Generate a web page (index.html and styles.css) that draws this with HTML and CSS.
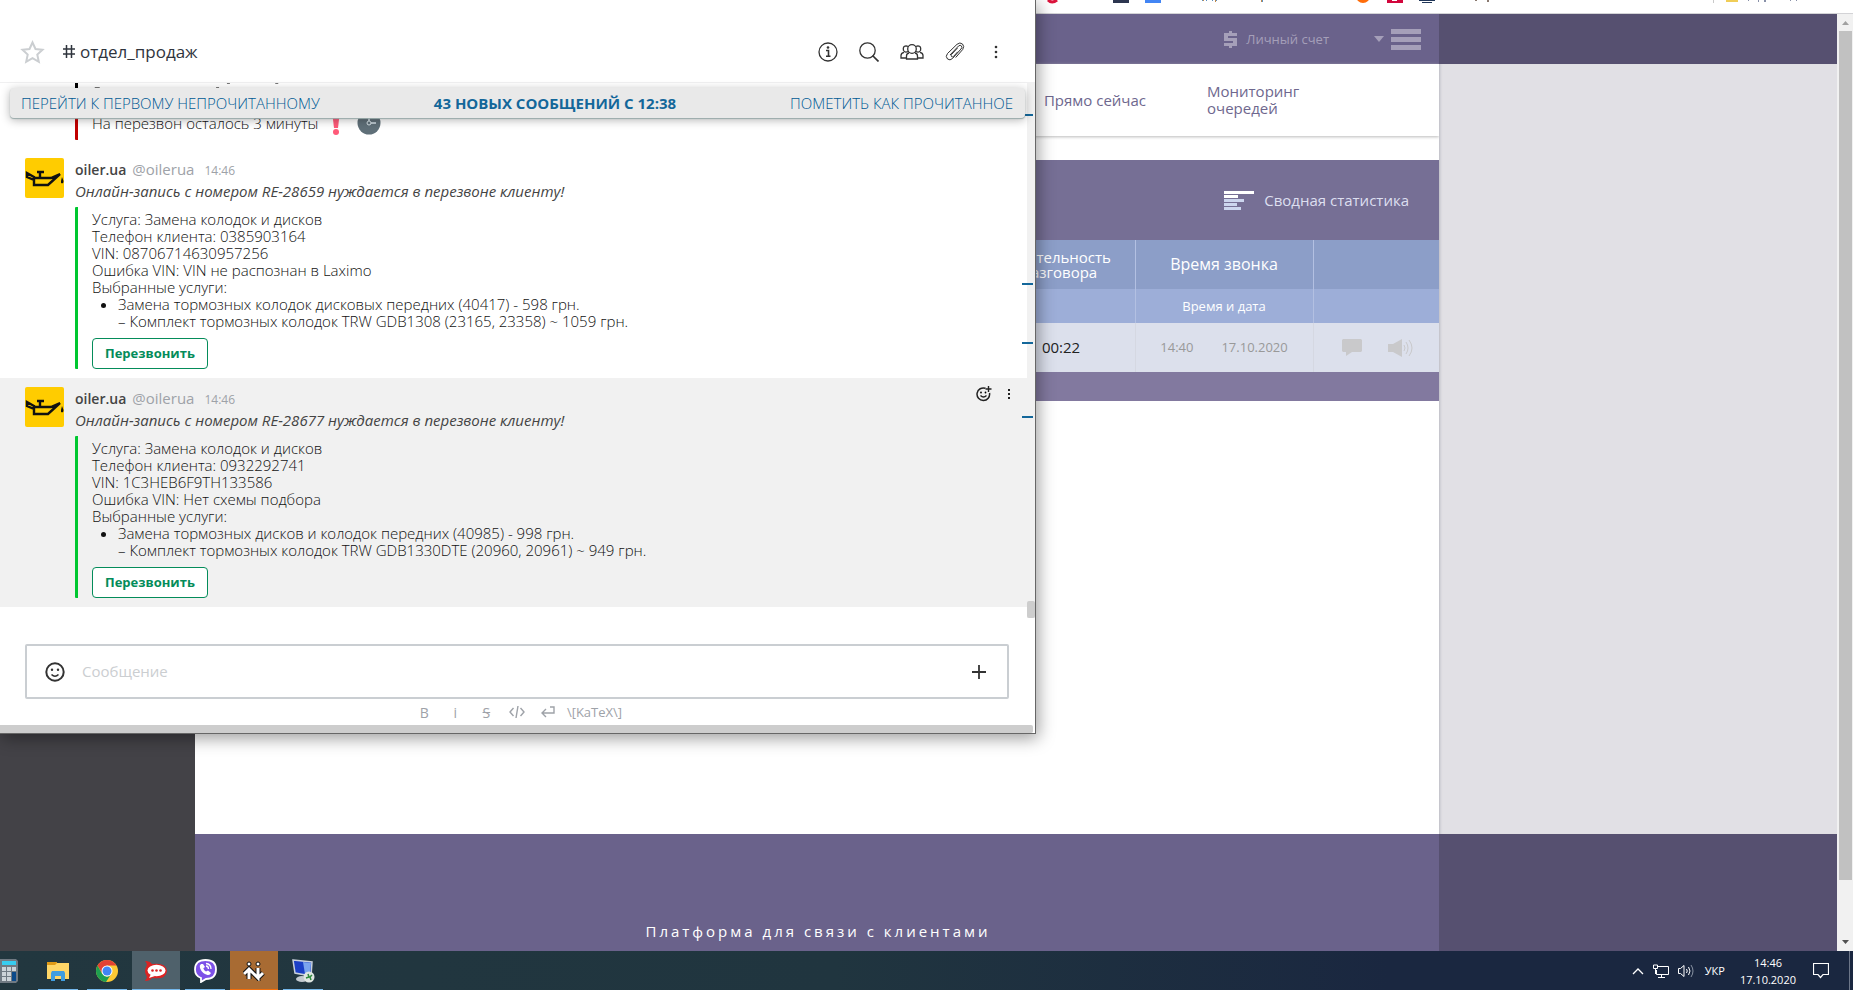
FILE: index.html
```html
<!DOCTYPE html>
<html lang="ru">
<head>
<meta charset="utf-8">
<title>отдел_продаж</title>
<link rel="stylesheet" href="styles.css">
</head>
<body>
<div class="desktop">
  <div class="browser">
    <div class="bookmarks">
      <svg width="817" height="13" viewBox="0 0 817 13" aria-hidden="true">
        <path d="M12 0q4 4 9 0" fill="none" stroke="#dc143c" stroke-width="3"/>
        <path d="M77 0h16v3H77z" fill="#2d3650"/><path d="M109 0h16v3h-16z" fill="#4285f4"/>
        <path d="M166 0h1v1h-1zM170 0h1v1h-1zM176 0h1v1h-1zM180 0h1v1h-1zM226 0h1v2h-1z" fill="#5a8fc0"/><path d="M167 0h1v1h-1zM179 0h1v2h-1zM225 0h1v2h-1z" fill="#c48a4a"/>
        <circle cx="327" cy="-4" r="7" fill="#ff6d0a"/>
        <path d="M351 0h16v3h-16z" fill="#d2063c"/><path d="M356 0h5v1h-5z" fill="#fff"/>
        <path d="M383 0h16v1h-16zM386 2h10v1h-10z" fill="#1f3557"/>
        <path d="M439 0h2v1h-2zM451 0h2v2h-2z" fill="#8a7a70"/>
        <path d="M677 0h1v3h-1z" fill="#c9c9c9"/>
        <path d="M690 0h12v2h-12z" fill="#f0cd57"/>
        <path d="M712 0h1v1h-1zM722 0h1v2h-1zM728 0h2v2h-2zM754 0h1v1h-1zM760 0h1v1h-1z" fill="#8890a8"/>
      </svg>
    </div>
    <div class="viewport">
      <div class="page">
        <div class="side side-left"><div class="side-head"></div><div class="side-body"></div></div>
        <main class="main">
          <header class="site-head">
            <a class="account" href="#">
              <svg width="14" height="17" viewBox="0 0 14 17" aria-hidden="true"><path d="M5 0h3v2h5v3H4v2h9v8H8v2H5v-2H0v-3h9v-2H0V2h5z" fill="#a59fb9"/></svg>
              Личный счет
            </a>
            <svg class="caret" width="10" height="6" viewBox="0 0 10 6" aria-hidden="true"><path d="M0 0h10L5 6z" fill="#a59fb9"/></svg>
            <button class="burger" aria-label="Меню"><span></span><span></span><span></span></button>
          </header>
          <nav class="site-nav">
            <a class="nav-now" href="#">Прямо сейчас</a>
            <a class="nav-queue" href="#">Мониторинг очередей</a>
          </nav>
          <section class="report">
            <div class="report-head">
              <a href="#">
                <svg width="30" height="19" viewBox="0 0 30 19" aria-hidden="true"><path d="M0 0h30v3H0zM0 4h14v3H0z" fill="#fff"/><path d="M0 8h20v3H0zM0 12h13v3H0zM0 16h17v3H0z" fill="#ccd5ee"/></svg>
                Сводная статистика
              </a>
            </div>
            <table class="calls">
              <colgroup><col><col class="col-len"><col class="col-time"><col class="col-act"></colgroup>
              <thead>
                <tr class="row-head"><th></th><th class="th-len">Длительность разговора</th><th>Время звонка</th><th></th></tr>
                <tr class="row-sub"><th></th><th></th><th>Время и дата</th><th></th></tr>
              </thead>
              <tbody>
                <tr><td></td><td class="len">00:22</td><td><div class="when"><span>14:40</span><span>17.10.2020</span></div></td>
                <td><div class="acts">
                  <svg width="20" height="17" viewBox="0 0 20 17" aria-hidden="true"><path d="M1 0h18l1 1v11l-1 1H10l-6 4v-4H1l-1-1V1z" fill="#c9c9cb"/></svg>
                  <svg width="26" height="18" viewBox="0 0 26 18" aria-hidden="true"><path d="M0 5h5l9-5v18l-9-5H0z" fill="#c9c9cb"/><path d="M16 6q2 3 0 6M18 3q4 6 0 12M21 1q6 8 0 16" fill="none" stroke="#c9c9cb"/></svg>
                </div></td></tr>
              </tbody>
            </table>
            <div class="report-foot"></div>
          </section>
          <div class="blank"></div>
          <footer class="site-foot">Платформа для связи с клиентами</footer>
        </main>
        <div class="side side-right"><div class="side-head"></div><div class="side-body"></div><div class="side-foot"></div></div>
      </div>
      <div class="scroll">
        <svg width="16" height="17" viewBox="0 0 16 17" aria-hidden="true"><path d="M5 11l3.500-4 3.500 4z" fill="#a0a0a0"/></svg>
        <div class="scroll-track"><div class="scroll-thumb"></div></div>
        <svg width="16" height="17" viewBox="0 0 16 17" aria-hidden="true"><path d="M5 6h7l-3.500 4z" fill="#505050"/></svg>
      </div>
    </div>
  </div>

  <section class="chat">
    <header class="chat-head">
      <svg width="25" height="24" viewBox="0 0 25 24" aria-hidden="true"><path d="M12.500 2.500l3 6.500 7 .8-5.200 4.800 1.500 7.200-6.300-3.600-6.300 3.600 1.500-7.200L2.500 9.800l7-.8z" fill="none" stroke="#cbced1" stroke-width="2"/></svg>
      <h1><svg width="12" height="13" viewBox="0 0 12 13" aria-hidden="true"><path d="M3.500 0v13M8.500 0v13M0 4h12M0 9h12" stroke="#2f343d" stroke-width="1.500"/></svg>отдел_продаж</h1>
      <div class="tools">
        <button aria-label="Информация"><svg width="20" height="20" viewBox="0 0 20 20"><circle cx="10" cy="10" r="9" fill="none" stroke="#333" stroke-width="1.300"/><circle cx="10" cy="5.500" r="1.300" fill="#333"/><path d="M8 8.500h2.500V14M8 14.300h4.500" fill="none" stroke="#333" stroke-width="1.600"/></svg></button>
        <button aria-label="Поиск"><svg width="20" height="20" viewBox="0 0 20 20"><circle cx="8.500" cy="8.500" r="7.700" fill="none" stroke="#333" stroke-width="1.300"/><path d="M13.500 13.500l6 6" stroke="#333" stroke-width="1.700"/></svg></button>
        <button aria-label="Участники"><svg width="24" height="16" viewBox="0 0 24 16" fill="none" stroke="#333" stroke-width="1.300"><circle cx="12" cy="5" r="4.300"/><path d="M9 9q-2.500.5-2.500 3v3h11v-3q0-2.500-2.500-3M8 7.500Q5 9 3.500 6.500 2.500 2 6 1.800q1.200 0 2 .8M16 7.500q3 1.500 4.500-1 1-4.500-2.500-4.700-1.200 0-2 .8M4 8.300Q1 9 1 11.500V14h5.500M20 8.300q3 .7 3 3.200V14h-5.500"/></svg></button>
        <button aria-label="Файлы"><svg width="20" height="20" viewBox="0 0 20 20"><path d="M5 13l8.500-9q1.800-1.500 3 0 1 1.500-.5 3l-8.500 9.500q-2.500 2.500-5 .5-2.500-2.500 0-5.500L12 2.300q3-2.500 5.500-.3 2.300 2.300.2 5.500l-7 8M12.500 6l-6 6.500q-.8 1.500.2 2.200.8.600 2-.4l4-4.500" fill="none" stroke="#333" stroke-width="1"/></svg></button>
        <button aria-label="Ещё"><svg width="20" height="20" viewBox="0 0 20 20" fill="#333"><circle cx="10" cy="5" r="1.300"/><circle cx="10" cy="10" r="1.300"/><circle cx="10" cy="15" r="1.300"/></svg></button>
      </div>
    </header>

    <div class="messages">
      <div class="unread-bar">
        <button>ПЕРЕЙТИ К ПЕРВОМУ НЕПРОЧИТАННОМУ</button>
        <strong>43 НОВЫХ СООБЩЕНИЙ С 12:38</strong>
        <button>ПОМЕТИТЬ КАК ПРОЧИТАННОЕ</button>
      </div>
      <div class="list">
        <div class="older">
          <svg class="older-edge" width="220" height="6" viewBox="0 0 220 6" aria-hidden="true"><path d="M17 4h5v1h-5zM140 4h3v1h-3zM151 0h3v1h-3zM200 0h3v1h-3z" fill="#777"/></svg>
          <div class="attach attach-red">
            <p class="due">На перезвон осталось 3 минуты
              <svg width="10" height="24" viewBox="0 0 10 24" aria-hidden="true"><path d="M1 0h8L7 17H3z" fill="#ff5a79"/><circle cx="5" cy="21" r="3" fill="#ff5a79"/></svg>
              <svg class="clock-emoji" width="24" height="24" viewBox="0 0 24 24" aria-hidden="true"><circle cx="12" cy="12" r="11.500" fill="#5f6f78"/><path d="M12 3v9h7" fill="none" stroke="#d5e0e6" stroke-width="1.600"/><circle cx="12" cy="12" r="2" fill="#5f6f78" stroke="#d5e0e6"/></svg>
            </p>
          </div>
        </div>
        <article class="msg">
          <svg class="avatar" width="39" height="40" viewBox="0 0 39 40" aria-hidden="true"><rect width="39" height="40" rx="2" fill="#fc0"/><path d="M9 19l-7-4v4l7 3v5h14l12-11-9 4H9zM15 19v-4M12 14h7" fill="none" stroke="#111" stroke-width="2.400"/><path d="M37 19l1.500 4q.3 2-1.500 2.500Q35.500 25 36 23z" fill="#111"/></svg>
          <div class="msg-body">
            <div class="who"><b>oiler.ua</b><span>@oilerua</span><time>14:46</time></div>
            <p class="lead">Онлайн-запись с номером RE-28659 нуждается в перезвоне клиенту!</p>
            <div class="attach">
              <p>Услуга: Замена колодок и дисков</p>
              <p>Телефон клиента: 0385903164</p>
              <p>VIN: 08706714630957256</p>
              <p>Ошибка VIN: VIN не распознан в Laximo</p>
              <p>Выбранные услуги:</p>
              <ul><li>Замена тормозных колодок дисковых передних (40417) - 598 грн.<br>– Комплект тормозных колодок TRW GDB1308 (23165, 23358) ~ 1059 грн.</li></ul>
              <button class="call">Перезвонить</button>
            </div>
          </div>
        </article>
        <article class="msg msg-hover">
          <svg class="avatar" width="39" height="40" viewBox="0 0 39 40" aria-hidden="true"><rect width="39" height="40" rx="2" fill="#fc0"/><path d="M9 19l-7-4v4l7 3v5h14l12-11-9 4H9zM15 19v-4M12 14h7" fill="none" stroke="#111" stroke-width="2.400"/><path d="M37 19l1.500 4q.3 2-1.500 2.500Q35.500 25 36 23z" fill="#111"/></svg>
          <div class="msg-body">
            <div class="who"><b>oiler.ua</b><span>@oilerua</span><time>14:46</time></div>
            <p class="lead">Онлайн-запись с номером RE-28677 нуждается в перезвоне клиенту!</p>
            <div class="attach">
              <p>Услуга: Замена колодок и дисков</p>
              <p>Телефон клиента: 0932292741</p>
              <p>VIN: 1C3HEB6F9TH133586</p>
              <p>Ошибка VIN: Нет схемы подбора</p>
              <p>Выбранные услуги:</p>
              <ul><li>Замена тормозных дисков и колодок передних (40985) - 998 грн.<br>– Комплект тормозных колодок TRW GDB1330DTE (20960, 20961) ~ 949 грн.</li></ul>
              <button class="call">Перезвонить</button>
            </div>
          </div>
          <div class="msg-tools">
            <button aria-label="Реакция"><svg width="16" height="16" viewBox="0 0 16 16"><path d="M9.500 2.300A6.300 6.300 0 1 0 13.500 7" fill="none" stroke="#222" stroke-width="1.500"/><path d="M12.500 0v6M9.500 3h6M4.500 9.500q3 3 6 0" fill="none" stroke="#222" stroke-width="1.400"/><circle cx="5" cy="6.500" r=".9"/><circle cx="9.500" cy="6.500" r=".9"/></svg></button>
            <button aria-label="Действия"><svg width="16" height="16" viewBox="0 0 16 16"><path d="M7 3h2v2H7zM7 7h2v2H7zM7 11h2v2H7z" fill="#222"/></svg></button>
          </div>
        </article>
      </div>
      <div class="list-scroll"><div></div></div>
      <i class="tick tick-1"></i><i class="tick tick-2"></i><i class="tick tick-3"></i><i class="tick tick-4"></i>
    </div>

    <div class="composer">
      <button aria-label="Эмодзи"><svg width="20" height="20" viewBox="0 0 20 20"><circle cx="10" cy="10" r="8.700" fill="none" stroke="#333" stroke-width="2"/><circle cx="7" cy="7.800" r="1.200" fill="#333"/><circle cx="13" cy="7.800" r="1.200" fill="#333"/><path d="M6.500 12.500q3.500 3.500 7 0" fill="none" stroke="#333" stroke-width="1.600"/></svg></button>
      <input type="text" placeholder="Сообщение" aria-label="Сообщение">
      <button aria-label="Добавить"><svg width="16" height="16" viewBox="0 0 16 16"><path d="M8 1v14M1 8h14" stroke="#333" stroke-width="1.800"/></svg></button>
    </div>
    <div class="formats">
      <button>B</button><button>i</button><button><s>S</s></button>
      <button aria-label="Код"><svg width="16" height="12" viewBox="0 0 16 12" fill="none" stroke="#9ea2a8" stroke-width="1.400"><path d="M4.500 2L1 6l3.500 4M11.500 2L15 6l-3.500 4M9 0L7 12"/></svg></button>
      <button aria-label="Многострочный"><svg width="14" height="12" viewBox="0 0 14 12" fill="none" stroke="#9ea2a8" stroke-width="1.400"><path d="M9 1h4v6H1M5 3L1 7l4 4"/></svg></button>
      <a href="#">\[KaTeX\]</a>
    </div>
    <div class="h-scroll"></div>
  </section>
</div>

<footer class="taskbar">
  <button class="app app-cut" aria-label="Калькулятор"><svg width="18" height="24" viewBox="0 0 18 24"><path d="M0 0h16l2 2v20l-2 2H0z" fill="#707a83"/><path d="M2 2h14v4H2z" fill="#38cdf0"/><path d="M2 8h4v4H2zM7 8h4v4H7zM12 8h4v4h-4zM2 13h4v4H2zM7 13h4v4H7zM2 18h4v4H2zM7 18h4v4H7z" fill="#ccd3d8"/><path d="M12 13h4v9h-4z" fill="#0b4a8a"/></svg></button>
  <button class="app open" aria-label="Проводник"><svg width="22" height="20" viewBox="0 0 22 20"><path d="M0 1h10v4H0z" fill="#e09a16"/><path d="M0 4h8l2-2h12v16H0z" fill="#ffd667"/><path d="M4 20v-8l1-2h12l1 2v8h-4v-5H8v5z" fill="#3f9de0"/></svg></button>
  <button class="app open" aria-label="Chrome"><svg width="22" height="22" viewBox="0 0 22 22"><circle cx="11" cy="11" r="11" fill="#fcc934"/><path d="M1.500 5.500A11 11 0 0 1 20.500 5.500H11L6 13z" fill="#e34133"/><path d="M1.500 5.500A11 11 0 0 0 10 22l5.500-8.500L11 17l-5-3.500z" fill="#1e9e50"/><circle cx="11" cy="11" r="5.500" fill="#fff"/><circle cx="11" cy="11" r="4.500" fill="#4285f4"/></svg></button>
  <button class="app open active" aria-label="Rocket.Chat"><svg width="22" height="20" viewBox="0 0 22 20"><path d="M0 0q5 0 7 3 14-2 15 7-1 9-15 7-2 3-7 3 3-4 1-6-2-4 0-8 2-3-1-6z" fill="#db2323"/><ellipse cx="11.500" cy="9.500" rx="9" ry="5.800" fill="#fff"/><path d="M6 13l-2 4 6-2z" fill="#fff"/><circle cx="7.500" cy="9.500" r="1.300" fill="#db2323"/><circle cx="11.500" cy="9.500" r="1.300" fill="#db2323"/><circle cx="15.500" cy="9.500" r="1.300" fill="#db2323"/></svg></button>
  <button class="app open" aria-label="Viber"><svg width="23" height="24" viewBox="0 0 23 24"><path d="M11.500 1Q22 1 22 10.500T12 20l-5 3v-4Q1 17 1 10.500 1 1 11.500 1z" fill="#7d51e8" stroke="#fff" stroke-width="1.800"/><path d="M7 5Q5 6.500 6 9q2 5.500 7.500 7 2.500.5 3.500-2l-3-2.500-2 1q-2-1-2.700-3.200L11 8 9 5z" fill="#fff"/><path d="M12 4.500q5 .5 5 5.500M12 7q2.500.3 2.500 3" fill="none" stroke="#fff" stroke-width="1.300"/></svg></button>
  <button class="app open alert" aria-label="Телефония"><svg width="22" height="20" viewBox="0 0 22 20"><g fill="none" stroke="#111" stroke-width="5"><path d="M6 18V8M1 13l5-5 9 9V7M11 13l4 4 5-5"/></g><g fill="none" stroke="#fff" stroke-width="3"><path d="M6 18V8M1 13l5-5 9 9V7M11 13l4 4 5-5"/></g><circle cx="6" cy="3" r="2" fill="#fff" stroke="#111"/><circle cx="15" cy="3" r="2" fill="#fff" stroke="#111"/></svg></button>
  <button class="app open" aria-label="Удалённый рабочий стол"><svg width="23" height="24" viewBox="0 0 23 24"><path d="M1 1l19 2-1 14L3 14z" fill="#1b3fc6" stroke="#c8d0dc" stroke-width="1.500"/><path d="M11 3l8 1-1 12-5-1z" fill="#7ba4ee"/><ellipse cx="10" cy="20" rx="6" ry="3" fill="#c3cad0"/><circle cx="17" cy="18" r="5.500" fill="#dfe5e2"/><path d="M14 19l3-1-1-3M20 16l-2 2 1 3" fill="none" stroke="#2e8b3d" stroke-width="1.500"/></svg></button>
  <div class="tray">
    <svg width="12" height="8" viewBox="0 0 12 8" aria-hidden="true"><path d="M1 7l5-5 5 5" fill="none" stroke="#fff" stroke-width="1.300"/></svg>
    <svg width="16" height="14" viewBox="0 0 16 14" aria-hidden="true"><path d="M5 2.500h10.500v8H3.500V6M8.500 10.500v3M5 13.500h7M.5 1h4v3.500h-4zM2.500 5v5" fill="none" stroke="#fff"/></svg>
    <svg width="18" height="14" viewBox="0 0 18 14" aria-hidden="true"><path d="M.5 4.500h2L6 1.500v11l-3.500-3h-2zM8.500 5q1.500 2 0 4M10.500 3q3 4 0 8" fill="none" stroke="#fff"/><path d="M13 1q4 6 0 12" fill="none" stroke="#8892a2"/></svg>
    <span class="lang">УКР</span>
    <div class="clock"><span>14:46</span><span>17.10.2020</span></div>
    <svg width="16" height="17" viewBox="0 0 16 17" aria-hidden="true"><path d="M.5 1.500h15v11H10l-2.500 3-2.500-3H.5z" fill="none" stroke="#fff" stroke-width="1.200"/></svg>
    <i class="peek"></i>
  </div>
</footer>
</body>
</html>
```

FILE: styles.css
```css
* { box-sizing: border-box; }
body {
  margin: 0;
  height: 100vh;
  display: flex;
  flex-direction: column;
  overflow: hidden;
  font: 15px/17px "Open Sans", "Noto Sans", sans-serif;
  color: #444;
}
p, h1, ul { margin: 0; padding: 0; }
button { font: inherit; color: inherit; background: none; border: 0; padding: 0; }
a { color: inherit; text-decoration: none; }
svg { display: block; flex: none; }

.desktop { position: relative; flex: 1; min-height: 0; display: flex; }

/* Browser window behind the chat */
.browser { flex: 1; display: flex; flex-direction: column; background: #fff; }
.bookmarks { height: 14px; display: flex; justify-content: flex-end; border-bottom: 1px solid #d3d3d6; }
.viewport { flex: 1; min-height: 0; display: flex; }
.page { flex: 1; display: grid; grid-template-columns: 195px minmax(0, 1244fr) minmax(0, 398fr); }
.side { display: flex; flex-direction: column; }
.side-head { height: 50px; background: #565070; }
.side-body { flex: 1; }
.side-left .side-body { background: #434247; }
.side-right .side-body { background: #e1e0e5; box-shadow: inset 3px 0 3px -2px #b8b8c0; }
.side-foot { height: 117px; background: #565070; }
.main { display: flex; flex-direction: column; background: #fff; }
.site-head { height: 50px; padding: 0 18px 0 0; display: flex; justify-content: flex-end; align-items: center; background: #6a628b; color: #a59fb9; font-size: 13px; }
.account { display: flex; align-items: center; gap: 8px; margin-right: 45px; }
.caret { margin-right: 7px; }
.burger { display: grid; gap: 3px; width: 30px; }
.burger span { height: 5px; background: #a59fb9; }
.site-nav { height: 72px; padding: 0 132px 0 0; display: flex; justify-content: flex-end; align-items: center; color: #6e678e; box-shadow: 0 1px 3px #bbb; }
.nav-now { margin-right: 61px; }
.nav-queue { width: 100px; }
.report { margin-top: 24px; }
.report-head { height: 80px; padding: 0 30px 0 0; display: flex; justify-content: flex-end; align-items: center; background: #766f95; color: #dddff0; }
.report-head a { display: flex; align-items: center; gap: 10px; }
.calls { width: 100%; table-layout: fixed; border-collapse: collapse; }
.calls th, .calls td { padding: 0; text-align: center; font-weight: 400; border-right: 1px solid #b3c0e2; }
.calls th:last-child, .calls td:last-child { border-right: 0; }
.col-len { width: 151px; }
.col-time { width: 178px; }
.col-act { width: 126px; }
.row-head { height: 49px; background: #8c9ec8; color: #fff; font-size: 16px; }
.calls .th-len { font-size: 15px; line-height: 15px; padding: 0 20px; }
.row-sub { height: 34px; background: #9daed8; color: #fff; font-size: 13px; }
.calls tbody tr { height: 49px; background: #dce0ec; }
.calls tbody td { border-color: #d5d8e2; }
.calls .len { color: #222; padding-left: 3px; }
.when { display: flex; justify-content: center; gap: 28px; font-size: 13px; color: #999; }
.acts { display: flex; justify-content: center; align-items: center; gap: 26px; padding-left: 3px; }
.report-foot { height: 29px; background: #82799f; }
.blank { flex: 1; }
.site-foot { height: 117px; padding: 87px 0 0 2px; text-align: center; background: #6a628b; color: #fff; letter-spacing: 3px; line-height: 20px; }
.scroll { width: 16px; display: flex; flex-direction: column; background: #f1f1f1; }
.scroll-track { flex: 1; padding: 0 1px 0 2px; }
.scroll-thumb { height: 94%; background: #c1c1c1; }

/* Chat window */
.chat {
  position: absolute;
  top: 0;
  left: 0;
  width: 1036px;
  height: 734px;
  display: flex;
  flex-direction: column;
  background: #fff;
  border: solid #666;
  border-width: 0 1px 1px 0;
  box-shadow: 2px 4px 16px rgba(0, 0, 0, .4);
}
.chat-head { height: 83px; padding: 21px 29px 0 20px; display: flex; align-items: center; border-bottom: 1px solid #f0f0f1; }
.chat-head h1 { flex: 1; display: flex; align-items: center; gap: 5px; margin-left: 18px; font-size: 17px; line-height: 22px; font-weight: 400; color: #2f343d; }
.tools { display: flex; gap: 21px; align-items: center; }
.messages { position: relative; flex: 1; min-height: 0; display: flex; }
.unread-bar {
  position: absolute;
  z-index: 1;
  top: 5px;
  left: 10px;
  right: 10px;
  height: 30px;
  padding: 0 12px 0 11px;
  display: flex;
  justify-content: space-between;
  align-items: center;
  background: #e9e9e9;
  border-radius: 4px;
  box-shadow: 0 1px 1px #9aa, 0 2px 10px rgba(0, 0, 0, .3);
  color: #13679a;
}
.unread-bar button { font-weight: 300; color: #005a94; }
.list { flex: 1; min-width: 0; display: flex; flex-direction: column; justify-content: flex-end; padding-bottom: 11px; overflow: hidden; }
.older { flex: 1; min-height: 0; display: flex; flex-direction: column; padding: 0 0 9px 75px; }
.older-edge { border-left: 3px solid #000; }
.attach { border-left: 3px solid #00c730; border-radius: 1px; padding: 4px 0 0 14px; margin-top: 5px; font-weight: 300; color: #111; }
.attach-red { flex: 1; border-color: #c10000; display: flex; align-items: flex-end; margin-top: 20px; padding: 0 0 5px 14px; }
.due { height: 24px; display: flex; align-items: center; gap: 13px; }
.clock-emoji { margin-left: 3px; }
.msg { position: relative; display: flex; gap: 11px; padding: 9px 25px 9px 25px; }
.msg-hover { background: #f1f1f1; margin-right: -8px; }
.msg-body { flex: 1; }
.who { display: flex; align-items: baseline; gap: 6px; height: 22px; line-height: 22px; }
.who b { font-size: 14px; font-weight: 600; }
.who span, .who time { color: #9ea2a8; }
.who time { font-size: 12px; margin-left: 4px; }
.lead { font-style: italic; line-height: 22px; }
.attach ul { padding-left: 26px; }
.call { display: block; margin-top: 8px; height: 31px; padding: 0 12px; background: #fff; border: 1px solid #048c5a; border-radius: 4px; color: #048c5a; font-size: 13px; font-weight: 700; }
.msg-tools { position: absolute; top: 8px; right: 18px; display: flex; gap: 9px; }
.list-scroll { width: 8px; display: flex; align-items: flex-end; background: #f1f1f1; }
.list-scroll div { width: 8px; height: 17px; border-radius: 2px; background: #cdcdcd; position: relative; }
.tick { position: absolute; right: 2px; width: 11px; height: 2px; background: #13679a; }
.tick-1 { top: 31px; }
.tick-2 { top: 200px; }
.tick-3 { top: 259px; }
.tick-4 { top: 333px; }
.composer { margin: 26px 26px 0 25px; height: 55px; padding: 0 20px 0 18px; display: flex; align-items: center; gap: 17px; border: 2px solid #caced2; border-radius: 2px; }
.composer input { flex: 1; min-width: 0; border: 0; padding: 0; font: inherit; background: none; }
.composer input::placeholder { color: #cbced1; opacity: 1; }
.formats { height: 26px; padding-right: 4px; display: flex; justify-content: center; align-items: center; color: #9ea2a8; font-size: 13px; }
.formats button { width: 31px; display: flex; justify-content: center; font-size: 14px; }
.formats a { margin-left: 3px; }
.h-scroll { height: 8px; margin-right: 2px; border-radius: 0 2px 2px 0; background: #cdcdcd; }

/* Taskbar */
.taskbar { height: 39px; display: flex; gap: 1px; background: linear-gradient(90deg, #22373f 0, #20353f 45%, #1a2740 75%, #1a2740); color: #fff; }
.app { width: 48px; display: flex; align-items: center; justify-content: center; background-repeat: no-repeat; }
.app-cut { width: 33px; justify-content: flex-start; }
.open { background-image: linear-gradient(#76b9ed, #76b9ed); background-size: 40px 1px; background-position: center bottom; }
.active { background-color: #4f616b; background-size: 48px 1px; }
.alert { background-color: #a86b33; background-image: linear-gradient(#f26f0c, #f26f0c); background-size: 48px 1px; }
.tray { margin-left: auto; display: flex; align-items: center; gap: 9px; font-size: 11px; }
.clock { display: grid; text-align: center; margin: 0 8px 0 6px; }
.peek { width: 1px; height: 39px; margin: 0 3px 0 11px; background: #6c7688; }
```
